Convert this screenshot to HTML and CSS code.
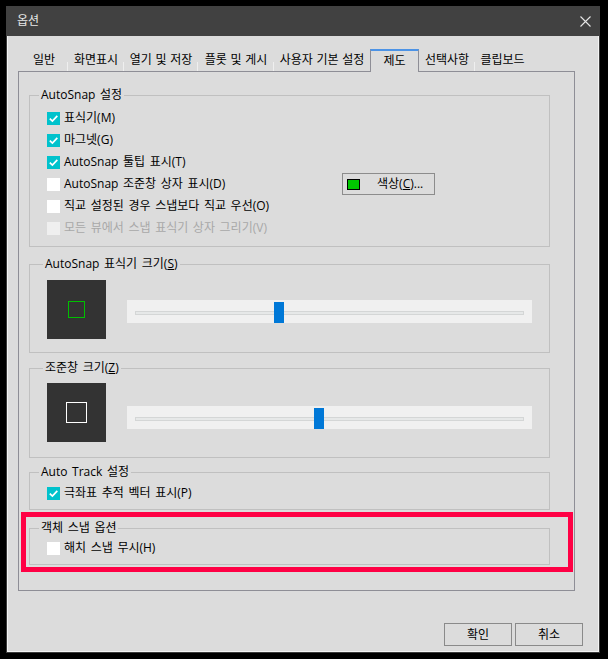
FILE: index.html
```html
<!DOCTYPE html>
<html lang="ko">
<head>
<meta charset="utf-8">
<title>옵션</title>
<link rel="stylesheet" href="styles.css">
</head>
<body>
<div class="window">
  <div class="titlebar">
    <span class="title">옵션</span>
    <svg class="close" width="11" height="11" viewBox="0 0 11 11"><path d="M0.5 0.5L10.5 10.5M10.5 0.5L0.5 10.5" stroke="#e6e6e6" stroke-width="1.1" fill="none"/></svg>
  </div>
  <div class="content">
    <div class="tabs">
      <div class="tab t1">일반</div>
      <div class="tab t2">화면표시</div>
      <div class="tab t3">열기 및 저장</div>
      <div class="tab t4">플롯 및 게시</div>
      <div class="tab t5">사용자 기본 설정</div>
      <div class="tab t6 active">제도</div>
      <div class="tab t7">선택사항</div>
      <div class="tab t8">클립보드</div>
    </div>
    <div class="panel">
      <div class="group g1">
        <div class="legend">AutoSnap 설정</div>
        <div class="rows rows-g1">
          <div class="row"><span class="cb checked"><svg width="13" height="13" viewBox="0 0 13 13"><path d="M2.8 6.6L5.4 9.1L10.3 3.9" stroke="#fff" stroke-width="1.7" fill="none"/></svg></span><span>표식기(M)</span></div>
          <div class="row"><span class="cb checked"><svg width="13" height="13" viewBox="0 0 13 13"><path d="M2.8 6.6L5.4 9.1L10.3 3.9" stroke="#fff" stroke-width="1.7" fill="none"/></svg></span><span>마그넷(G)</span></div>
          <div class="row"><span class="cb checked"><svg width="13" height="13" viewBox="0 0 13 13"><path d="M2.8 6.6L5.4 9.1L10.3 3.9" stroke="#fff" stroke-width="1.7" fill="none"/></svg></span><span>AutoSnap 툴팁 표시(T)</span></div>
          <div class="row"><span class="cb"></span><span class="row-label">AutoSnap 조준창 상자 표시(D)</span>
            <button class="color-btn"><span class="swatch"></span><span class="color-text">색상(<u>C</u>)...</span></button>
          </div>
          <div class="row"><span class="cb"></span><span>직교 설정된 경우 스냅보다 직교 우선(O)</span></div>
          <div class="row disabled"><span class="cb"></span><span>모든 뷰에서 스냅 표식기 상자 그리기(V)</span></div>
        </div>
      </div>

      <div class="group g2">
        <div class="legend legend-wide">AutoSnap 표식기 크기(<u>S</u>)</div>
        <div class="scale scale-g2">
          <div class="preview"><span class="marker"></span></div>
          <div class="slider slider-g2"><div class="track"></div><div class="thumb" style="left:147px"></div></div>
        </div>
      </div>

      <div class="group g3">
        <div class="legend legend-wide">조준창 크기(<u>Z</u>)</div>
        <div class="scale scale-g3">
          <div class="preview"><span class="aperture"></span></div>
          <div class="slider slider-g3"><div class="track"></div><div class="thumb" style="left:187px"></div></div>
        </div>
      </div>

      <div class="group g4">
        <div class="legend">Auto Track 설정</div>
        <div class="rows rows-g4">
          <div class="row"><span class="cb checked"><svg width="13" height="13" viewBox="0 0 13 13"><path d="M2.8 6.6L5.4 9.1L10.3 3.9" stroke="#fff" stroke-width="1.7" fill="none"/></svg></span><span>극좌표 추적 벡터 표시(P)</span></div>
        </div>
      </div>

      <div class="group g5">
        <div class="legend">객체 스냅 옵션</div>
        <div class="rows rows-g5">
          <div class="row"><span class="cb"></span><span>해치 스냅 무시(H)</span></div>
        </div>
      </div>
    </div>
    <div class="buttons">
      <button class="btn">확인</button>
      <button class="btn">취소</button>
    </div>
  </div>
  <div class="highlight"></div>
</div>
</body>
</html>
```

FILE: styles.css
```css
* { box-sizing: border-box; }
html, body { margin: 0; padding: 0; }
body {
  background: #000;
  width: 608px;
  height: 659px;
  padding: 6px 0 0 6px;
  font-family: "Open Sans", "Noto Sans CJK KR", sans-serif;
  font-size: 12px;
  color: #000;
  word-spacing: 1.5px;
  overflow: hidden;
}
.window {
  position: relative;
  width: 594px;
  height: 647px;
  background: #dcdcdc;
  border: 1px solid #3c3c3c;
  border-top: none;
  box-shadow: inset 1px 0 0 #f4f4f4, inset -1px 0 0 #f4f4f4, inset 0 -1px 0 #f4f4f4;
}
.titlebar {
  height: 30px;
  margin: 0 -1px;
  background: #414141;
  display: flex;
  align-items: center;
  justify-content: space-between;
  padding: 0 9px 0 11px;
}
.title { color: #e8e8e8; font-size: 12px; line-height: 16px; }
.close { display: block; }

.content { padding: 0 16px 0 11px; }

.tabs {
  display: flex;
  align-items: flex-end;
  height: 35px;
  margin-left: 2px;
}
.tab {
  position: relative;
  height: 22px;
  display: flex;
  align-items: center;
  justify-content: center;
  white-space: nowrap;
  line-height: 16px;
  word-spacing: 0.5px;
}
.tab::after {
  content: "";
  position: absolute;
  right: 0;
  bottom: 0;
  width: 1px;
  height: 9px;
  background: #efefef;
}
.t1 { width: 48px; }
.t2 { width: 56px; }
.t3 { width: 74px; }
.t4 { width: 76px; }
.t5 { width: 96px; }
.t6 { width: 49px; }
.t7 { width: 56px; }
.t8 { width: 55px; }
.tab.active {
  height: 23px;
  margin-bottom: -1px;
  border: 1px solid #8e8e96;
  border-top: 2px solid #4c93e6;
  border-bottom: none;
  background: #dcdcdc;
  padding-bottom: 2px;
  z-index: 1;
}
.tab.active::after, .t5::after, .t8::after { display: none; }

.panel {
  width: 557px;
  height: 520px;
  border: 1px solid #8e8e96;
  padding: 23px 0 0 10px;
}
.group {
  width: 521px;
  border: 1px solid #c0c0c0;
}
.g1 { height: 152px; }
.g2 { height: 89px; margin-top: 17px; }
.g3 { height: 90px; margin-top: 15px; }
.g4 { height: 38px; margin-top: 14px; }
.g5 { height: 37px; margin-top: 18px; }

.legend {
  width: max-content;
  height: 16px;
  line-height: 16px;
  margin: -9px 0 0 9px;
  padding: 0 2px;
  background: #dcdcdc;
  white-space: nowrap;
}
.legend-wide { margin-left: 13px; }

.rows-g1 { margin-top: 4px; }
.rows-g4 { margin-top: 2px; }
.rows-g5 { margin-top: 1px; }
.row {
  height: 22px;
  display: flex;
  align-items: center;
  padding-left: 17px;
  line-height: 16px;
  white-space: nowrap;
}
.cb {
  flex: none;
  width: 13px;
  height: 13px;
  background: #fff;
  margin-right: 4px;
}
.cb svg { display: block; }
.cb.checked { background: #00c2cc; }
.row.disabled { color: #a8a8a8; }
.row.disabled .cb { background: #efefef; }
.row-label { width: 278px; flex: none; }

.color-btn {
  flex: none;
  width: 93px;
  height: 22px;
  border: 1px solid #8c8c8c;
  background: #dcdcdc;
  display: flex;
  align-items: center;
  padding: 0 0 0 4px;
  margin: 0;
  font: inherit;
  word-spacing: inherit;
  color: #000;
}
.swatch {
  width: 13px;
  height: 11px;
  border: 1px solid #000;
  background: #00c800;
}
.color-text { margin-left: 17px; line-height: 16px; }

.scale { display: flex; align-items: flex-start; padding-left: 17px; }
.scale-g2 { margin-top: 8px; }
.scale-g3 { margin-top: 7px; }
.preview {
  width: 59px;
  height: 59px;
  background: #333;
  display: flex;
  align-items: center;
  justify-content: center;
  flex: none;
}
.marker { width: 17px; height: 17px; border: 1px solid #00c000; }
.aperture { width: 21px; height: 21px; border: 1px solid #fff; }
.slider {
  position: relative;
  width: 405px;
  height: 23px;
  margin-left: 21px;
  background: #f0f0f0;
  padding: 11px 8px 0;
}
.slider-g2 { margin-top: 20px; }
.slider-g3 { margin-top: 23px; }
.track {
  height: 4px;
  border: 1px solid #d4d6d6;
  background: #e6e8e8;
}
.thumb {
  position: absolute;
  top: 2px;
  width: 10px;
  height: 21px;
  background: #0078d7;
}

.buttons {
  display: flex;
  justify-content: flex-end;
  gap: 3px;
  margin-top: 32px;
}
.btn {
  width: 68px;
  height: 23px;
  border: 1px solid #8a8a8a;
  background: #dcdcdc;
  font: inherit;
  color: #000;
  padding: 0;
  line-height: 16px;
}

.highlight {
  position: absolute;
  left: 14px;
  top: 506px;
  width: 552px;
  height: 60px;
  border: 5px solid #ff0044;
  pointer-events: none;
}
```
